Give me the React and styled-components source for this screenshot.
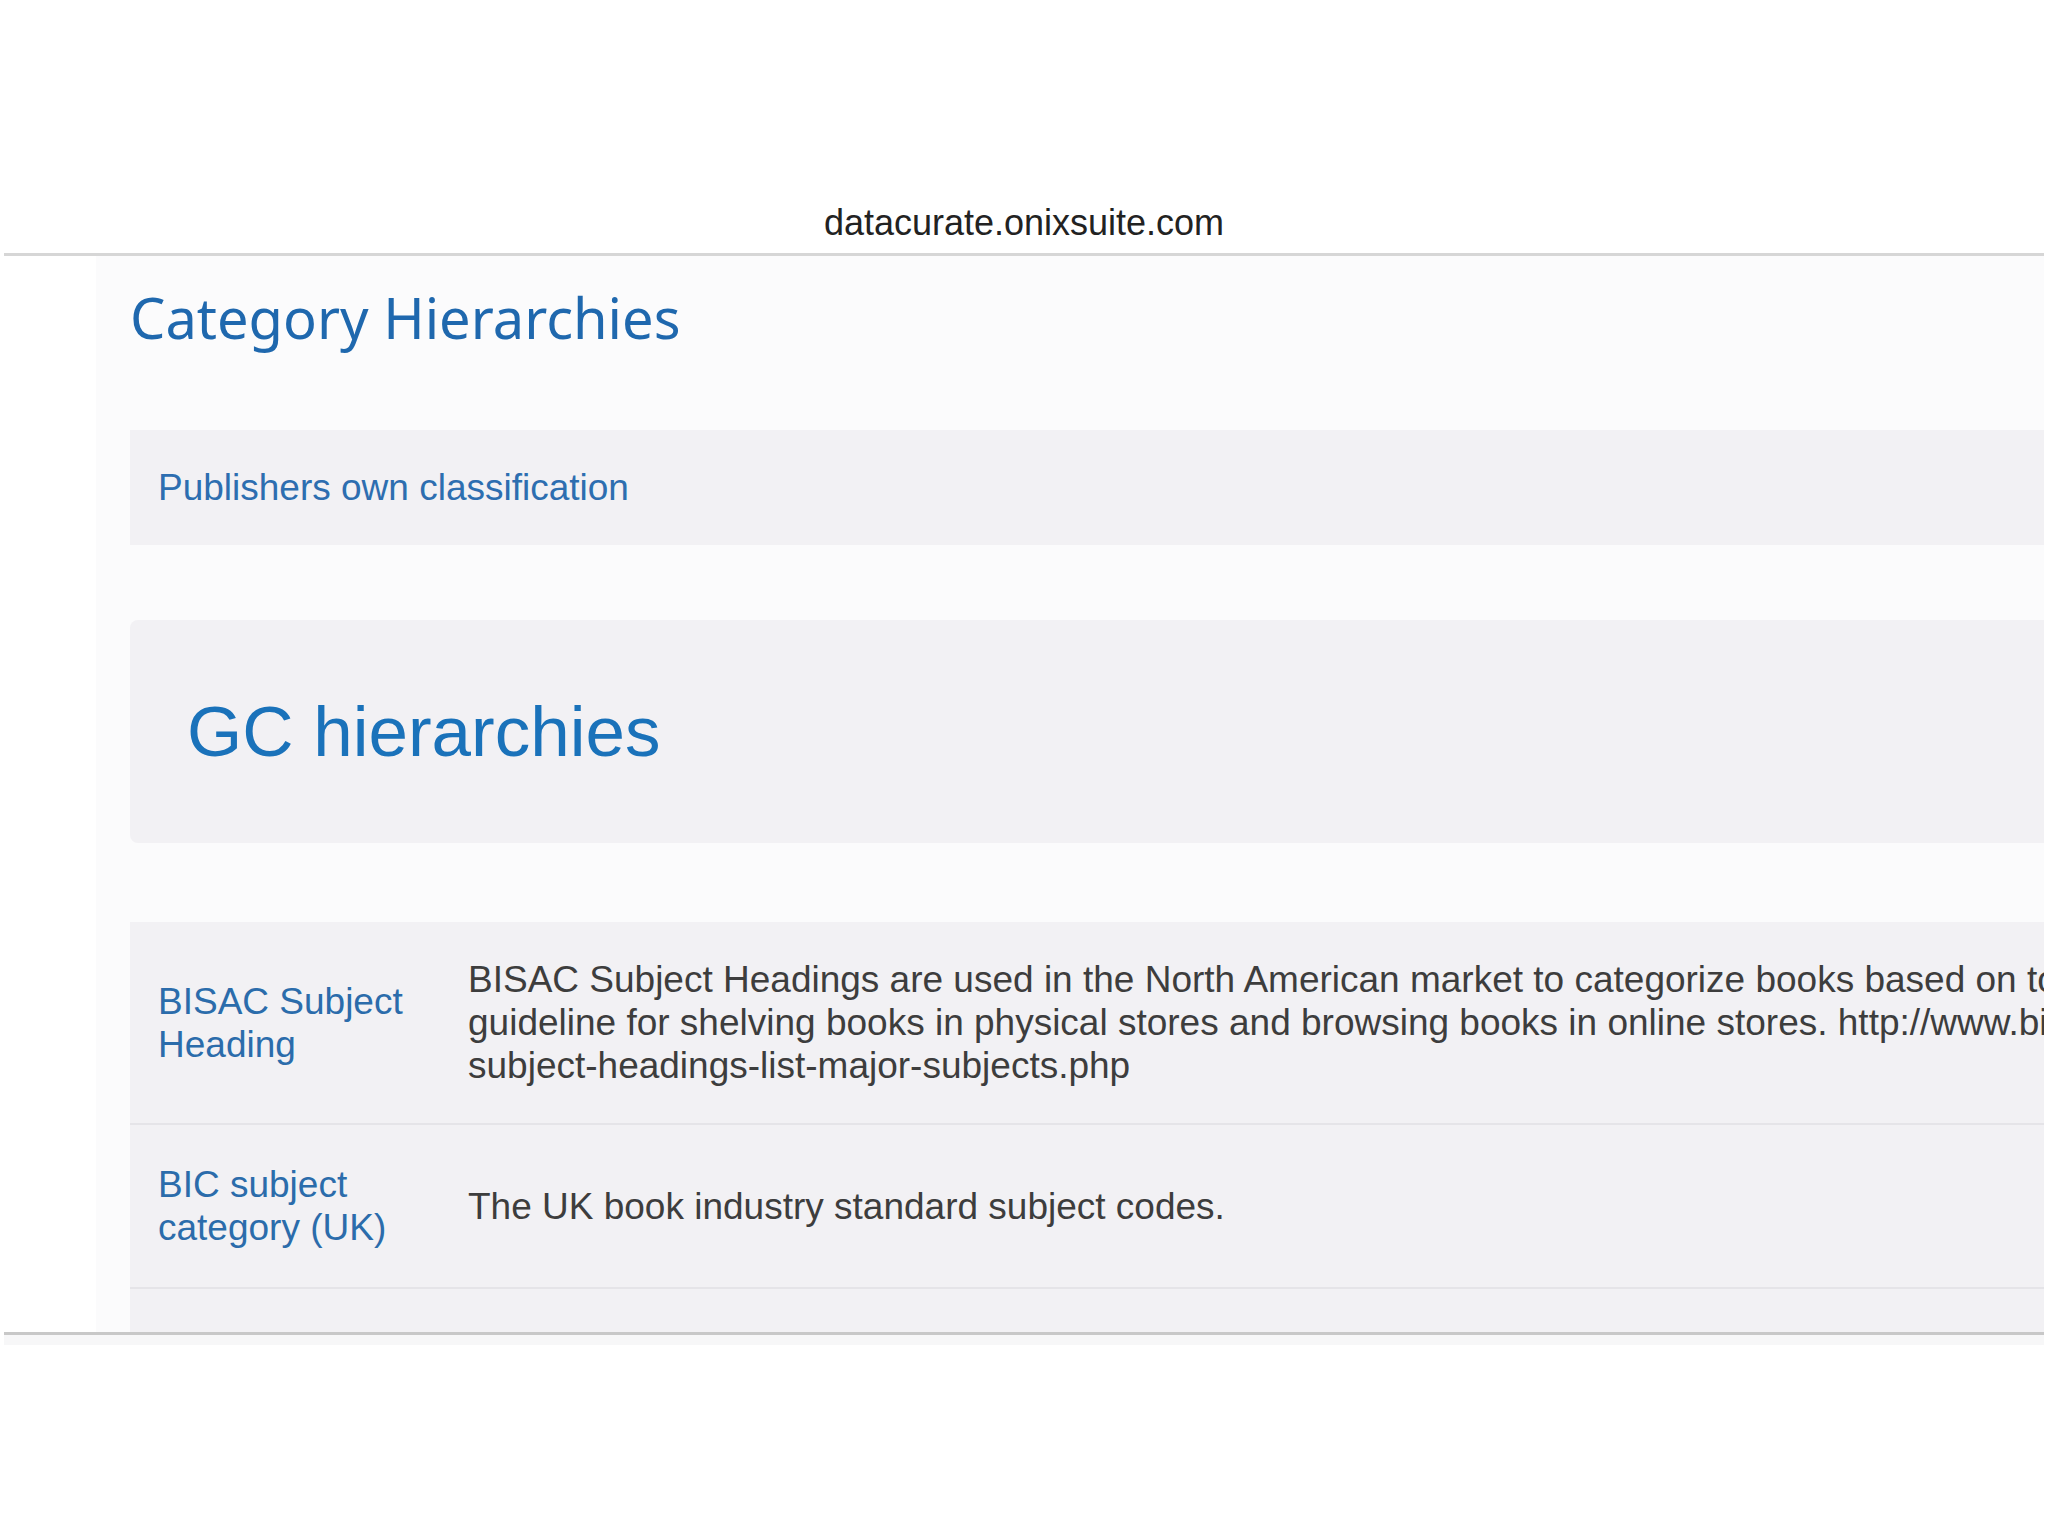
import React from "react";
import styled, { createGlobalStyle } from "styled-components";

const GlobalStyle = createGlobalStyle`
  html, body {
    margin: 0;
    padding: 0;
    background: #fff;
    overflow: hidden;
  }
  body {
    font-family: "Liberation Sans", Arial, Helvetica, sans-serif;
  }
`;

const Frame = styled.div`
  width: 2048px;
  padding: 0 4px;
  box-sizing: border-box;
  overflow: hidden;
`;

const AddressBar = styled.div`
  padding-top: 200px;
  padding-bottom: 7px;
  line-height: 46px;
  font-size: 36px;
  text-align: center;
  color: #222;
  border-bottom: 3px solid #d6d6d6;
`;

const Content = styled.div`
  background: linear-gradient(to right, #fff 92px, #fbfbfc 92px);
  padding: 25px 0 0 126px;
  border-bottom: 3px solid #c8c8c8;
`;

const Title = styled.h1`
  margin: 0;
  font-family: "Noto Sans", "Liberation Sans", sans-serif;
  font-weight: 400;
  font-size: 56px;
  line-height: 72px;
  color: #1f68ae;
`;

const Panel = styled.div`
  display: flex;
  align-items: center;
  background: #f2f1f4;
  height: ${(p) => p.height}px;
  margin-top: ${(p) => p.gap}px;
  padding-left: ${(p) => p.inset}px;
  border-radius: ${(p) => (p.rounded ? "8px 0 0 8px" : "0")};
`;

const PanelLink = styled.span`
  font-size: 37px;
  color: #2d6eb0;
`;

const SectionHeading = styled.h2`
  margin: 0;
  font-weight: 400;
  font-size: 71px;
  color: #1a72ba;
`;

const Table = styled.div`
  margin-top: 79px;
  background: #f2f1f4;
  overflow: hidden;
  padding-bottom: 43px;
`;

const Row = styled.div`
  display: flex;
  align-items: center;
  height: ${(p) => p.height}px;
  border-bottom: 2px solid #e5e4e8;
`;

const Label = styled.div`
  flex: 0 0 338px;
  box-sizing: border-box;
  padding-left: 28px;
  font-size: 37px;
  line-height: 43px;
  color: #2b6cab;
`;

const Description = styled.div`
  font-size: 37px;
  line-height: 43px;
  color: #3d3d3d;
  white-space: nowrap;
`;

const Line = styled.div``;

const BottomStrip = styled.div`
  height: 10px;
  background: #f7f7f8;
`;

const rows = [
  {
    label: ["BISAC Subject", "Heading"],
    text: [
      "BISAC Subject Headings are used in the North American market to categorize books based on topical content. They serve as a",
      "guideline for shelving books in physical stores and browsing books in online stores. http://www.bisg.org/publications/bisac-",
      "subject-headings-list-major-subjects.php",
    ],
    height: 201,
  },
  {
    label: ["BIC subject", "category (UK)"],
    text: ["The UK book industry standard subject codes."],
    height: 162,
  },
];

export default function App() {
  return (
    <>
      <GlobalStyle />
      <Frame>
        <AddressBar>datacurate.onixsuite.com</AddressBar>
        <Content>
          <Title>Category Hierarchies</Title>
          <Panel height={115} gap={77} inset={28}>
            <PanelLink>Publishers own classification</PanelLink>
          </Panel>
          <Panel height={223} gap={75} inset={57} rounded>
            <SectionHeading>GC hierarchies</SectionHeading>
          </Panel>
          <Table>
            {rows.map((r) => (
              <Row key={r.label.join(" ")} height={r.height}>
                <Label>
                  {r.label.map((l) => (
                    <Line key={l}>{l}</Line>
                  ))}
                </Label>
                <Description>
                  {r.text.map((t) => (
                    <Line key={t}>{t}</Line>
                  ))}
                </Description>
              </Row>
            ))}
          </Table>
        </Content>
        <BottomStrip />
      </Frame>
    </>
  );
}
